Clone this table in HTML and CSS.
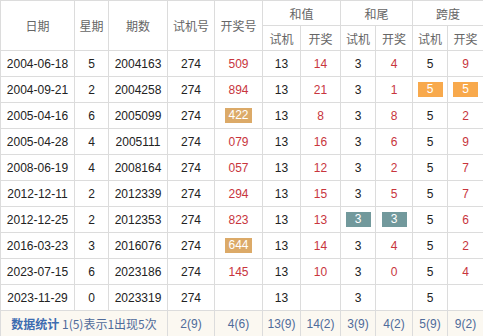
FILE: index.html
```html
<!DOCTYPE html>
<html lang="zh-CN">
<head>
  <meta charset="UTF-8">
  <title>试机号历史</title>
  <link rel="stylesheet" href="styles.css">
</head>
<body>
  <table class="kj-table">
    <colgroup>
      <col class="c-date"><col class="c-week"><col class="c-issue"><col class="c-test"><col class="c-draw">
      <col class="c-s1"><col class="c-s2"><col class="c-t1"><col class="c-t2"><col class="c-k1"><col class="c-k2">
    </colgroup>
    <thead>
      <tr>
        <th rowspan="2">日期</th>
        <th rowspan="2">星期</th>
        <th rowspan="2">期数</th>
        <th rowspan="2">试机号</th>
        <th rowspan="2">开奖号</th>
        <th colspan="2">和值</th>
        <th colspan="2">和尾</th>
        <th colspan="2">跨度</th>
      </tr>
      <tr class="sub">
        <th>试机</th><th>开奖</th>
        <th>试机</th><th>开奖</th>
        <th>试机</th><th>开奖</th>
      </tr>
    </thead>
    <tbody>
      <tr><td>2004-06-18</td><td>5</td><td>2004163</td><td>274</td><td class="red">509</td><td>13</td><td class="red">14</td><td>3</td><td class="red">4</td><td>5</td><td class="red">9</td></tr>
      <tr><td>2004-09-21</td><td>2</td><td>2004258</td><td>274</td><td class="red">894</td><td>13</td><td class="red">21</td><td>3</td><td class="red">1</td><td><span class="tag orange">5</span></td><td><span class="tag orange">5</span></td></tr>
      <tr><td>2005-04-16</td><td>6</td><td>2005099</td><td>274</td><td><span class="tag tan">422</span></td><td>13</td><td class="red">8</td><td>3</td><td class="red">8</td><td>5</td><td class="red">2</td></tr>
      <tr><td>2005-04-28</td><td>4</td><td>2005111</td><td>274</td><td class="red">079</td><td>13</td><td class="red">16</td><td>3</td><td class="red">6</td><td>5</td><td class="red">9</td></tr>
      <tr><td>2008-06-19</td><td>4</td><td>2008164</td><td>274</td><td class="red">057</td><td>13</td><td class="red">12</td><td>3</td><td class="red">2</td><td>5</td><td class="red">7</td></tr>
      <tr><td>2012-12-11</td><td>2</td><td>2012339</td><td>274</td><td class="red">294</td><td>13</td><td class="red">15</td><td>3</td><td class="red">5</td><td>5</td><td class="red">7</td></tr>
      <tr><td>2012-12-25</td><td>2</td><td>2012353</td><td>274</td><td class="red">823</td><td>13</td><td class="red">13</td><td><span class="tag teal">3</span></td><td><span class="tag teal">3</span></td><td>5</td><td class="red">6</td></tr>
      <tr><td>2016-03-23</td><td>3</td><td>2016076</td><td>274</td><td><span class="tag tan">644</span></td><td>13</td><td class="red">14</td><td>3</td><td class="red">4</td><td>5</td><td class="red">2</td></tr>
      <tr><td>2023-07-15</td><td>6</td><td>2023186</td><td>274</td><td class="red">145</td><td>13</td><td class="red">10</td><td>3</td><td class="red">0</td><td>5</td><td class="red">4</td></tr>
      <tr><td>2023-11-29</td><td>0</td><td>2023319</td><td>274</td><td></td><td>13</td><td></td><td>3</td><td></td><td>5</td><td></td></tr>
    </tbody>
    <tfoot>
      <tr>
        <td colspan="3" class="stat-title"><b>数据统计</b> 1(5)表示1出现5次</td>
        <td>2(9)</td><td>4(6)</td><td>13(9)</td><td>14(2)</td><td>3(9)</td><td>4(2)</td><td>5(9)</td><td>9(2)</td>
      </tr>
    </tfoot>
  </table>
</body>
</html>
```

FILE: styles.css
```css
body {
  margin: 0;
  background: #fff;
  font-family: "Liberation Sans", Arial, "Noto Sans CJK SC", sans-serif;
  font-size: 12px;
  color: #222;
}

.kj-table {
  width: 483px;
  table-layout: fixed;
  border-collapse: collapse;
}

.c-date { width: 74px; }
.c-week { width: 34px; }
.c-issue { width: 59px; }
.c-test { width: 47px; }
.c-draw { width: 48px; }
.c-s1 { width: 38px; }
.c-s2 { width: 40px; }
.c-t1 { width: 35px; }
.c-t2 { width: 37px; }
.c-k1 { width: 35px; }
.c-k2 { width: 36px; }

.kj-table th,
.kj-table td {
  border: 1px solid #dcdcdc;
  padding: 0;
  text-align: center;
  white-space: nowrap;
}

.kj-table th {
  height: 24px;
  font-weight: normal;
  color: #666;
  font-family: "Noto Sans CJK SC", sans-serif;
}

.kj-table td {
  height: 25px;
}

.red {
  color: #c8353d;
}

.tag {
  display: inline-block;
  min-width: 25px;
  padding: 0 3px;
  box-sizing: border-box;
  line-height: 15px;
  color: #fff;
}
.tag.orange { background: #f8a94c; }
.tag.tan { background: #dcaa68; }
.tag.teal { background: #72999c; }

.kj-table tfoot td {
  background: #fbf8f1;
  color: #4f6b9a;
}

.stat-title {
  font-family: "Noto Sans CJK SC", sans-serif;
}
.stat-title b {
  color: #3d6cb0;
}
```
